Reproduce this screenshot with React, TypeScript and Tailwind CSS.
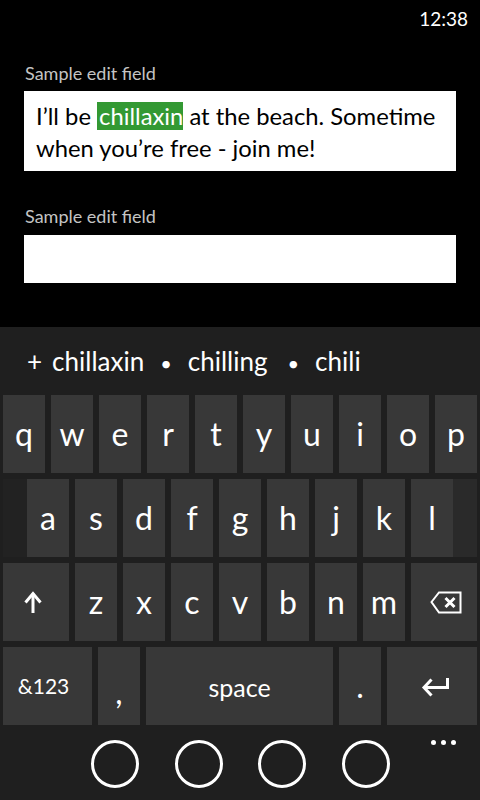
import React from 'react';

function Key(props: { children?: React.ReactNode; className?: string }) {
  return (
    <div
      className={
        'flex h-[78px] items-center justify-center bg-[#383838] text-white ' +
        (props.className ?? 'w-[42px] text-[32px]')
      }
    >
      {props.children}
    </div>
  );
}

function ShiftIcon() {
  return (
    <svg width="18" height="22" viewBox="0 0 18 22" className="mr-[7px]">
      <path d="M9 2.5V22" stroke="white" strokeWidth="3" fill="none" />
      <path d="M1.5 11.5L9 2.5L16.5 11.5" stroke="white" strokeWidth="3" fill="none" />
    </svg>
  );
}

function BackspaceIcon() {
  return (
    <svg width="32" height="24" viewBox="0 0 32 24" className="ml-[4px]">
      <path d="M1.5 12L9 2.5H30.5V22.5H9Z" stroke="white" strokeWidth="2" fill="none" strokeLinejoin="miter" />
      <path d="M15.5 8L24.5 17M24.5 8L15.5 17" stroke="white" strokeWidth="3" fill="none" />
    </svg>
  );
}

function EnterIcon() {
  return (
    <svg width="28" height="20" viewBox="0 0 28 20" className="ml-[5px] mt-[2px]">
      <path d="M3 10.5H26.5V1" stroke="white" strokeWidth="3" fill="none" />
      <path d="M10.5 2.5L3 10.5L10.5 18.5" stroke="white" strokeWidth="3" fill="none" />
    </svg>
  );
}

function Row(props: { children: React.ReactNode }) {
  return <div className="flex h-[84px] items-center gap-[6px] px-[3px]">{props.children}</div>;
}

export default function App() {
  const row1 = ['q', 'w', 'e', 'r', 't', 'y', 'u', 'i', 'o', 'p'];
  const row2 = ['a', 's', 'd', 'f', 'g', 'h', 'j', 'k', 'l'];
  const row3 = ['z', 'x', 'c', 'v', 'b', 'n', 'm'];

  return (
    <div className="flex h-[800px] w-[480px] flex-col bg-black font-['Lato',sans-serif]">
      {/* status bar + edit fields */}
      <div className="flex h-[327px] flex-col">
        <div className="flex h-[38px] items-center justify-end pr-[12px] text-[19px] text-white">12:38</div>

        <div className="mt-[24px] px-[25px] text-[18px] leading-[22px] text-[#c4c4c4]">Sample edit field</div>
        <div className="mx-[24px] mt-[7px] h-[80px] bg-white pl-[12px] pt-[9px] text-[23.8px] leading-[32px] text-black">
          I’ll be <span className="bg-[#339933] pl-[2px] text-white">chillaxin</span> at the beach. Sometime
          <br />
          when you’re free - join me!
        </div>

        <div className="mt-[34px] px-[25px] text-[18px] leading-[22px] text-[#c4c4c4]">Sample edit field</div>
        <div className="mx-[24px] mt-[8px] h-[48px] bg-white" />
      </div>

      {/* keyboard */}
      <div className="flex flex-1 flex-col bg-[#1f1f1f]">
        {/* suggestions */}
        <div className="flex h-[65px] items-baseline pl-[27px] pt-[19px] text-[26px] leading-[31px] text-white">
          <span>+</span>
          <span className="ml-[10px]">chillaxin</span>
          <span className="ml-[16px] text-[20px]">•</span>
          <span className="ml-[16px]">chilling</span>
          <span className="ml-[20px] text-[20px]">•</span>
          <span className="ml-[16px]">chili</span>
        </div>

        <Row>
          {row1.map((k) => (
            <Key key={k}>{k}</Key>
          ))}
        </Row>

        <div className="flex h-[84px] items-center px-[3px]">
          <div className="h-[78px] w-[24px] bg-[#222222]" />
          <div className="flex gap-[6px]">
            {row2.map((k) => (
              <Key key={k}>{k}</Key>
            ))}
          </div>
          <div className="h-[78px] w-[24px] bg-[#2a2a2a]" />
        </div>

        <Row>
          <Key className="w-[66px]">
            <ShiftIcon />
          </Key>
          {row3.map((k) => (
            <Key key={k}>{k}</Key>
          ))}
          <Key className="w-[66px]">
            <BackspaceIcon />
          </Key>
        </Row>

        <Row>
          <Key className="w-[89px] pr-[8px] text-[21px]">&amp;123</Key>
          <Key className="w-[42px] text-[32px]">
            <span className="translate-y-[6px]">,</span>
          </Key>
          <Key className="w-[187px] pt-[3px] text-[25px]">space</Key>
          <Key className="w-[42px] text-[32px]">.</Key>
          <Key className="w-[90px]">
            <EnterIcon />
          </Key>
        </Row>

        {/* app bar */}
        <div className="flex flex-1 items-start pl-[91px] pt-[12px]">
          <div className="flex gap-[35.7px]">
            {[0, 1, 2, 3].map((i) => (
              <div key={i} className="h-[48px] w-[48px] rounded-full border-[3px] border-white" />
            ))}
          </div>
          <div className="ml-[41px] flex gap-[5px]">
            <div className="h-[5px] w-[5px] rounded-full bg-white" />
            <div className="h-[5px] w-[5px] rounded-full bg-white" />
            <div className="h-[5px] w-[5px] rounded-full bg-white" />
          </div>
        </div>
      </div>
    </div>
  );
}
